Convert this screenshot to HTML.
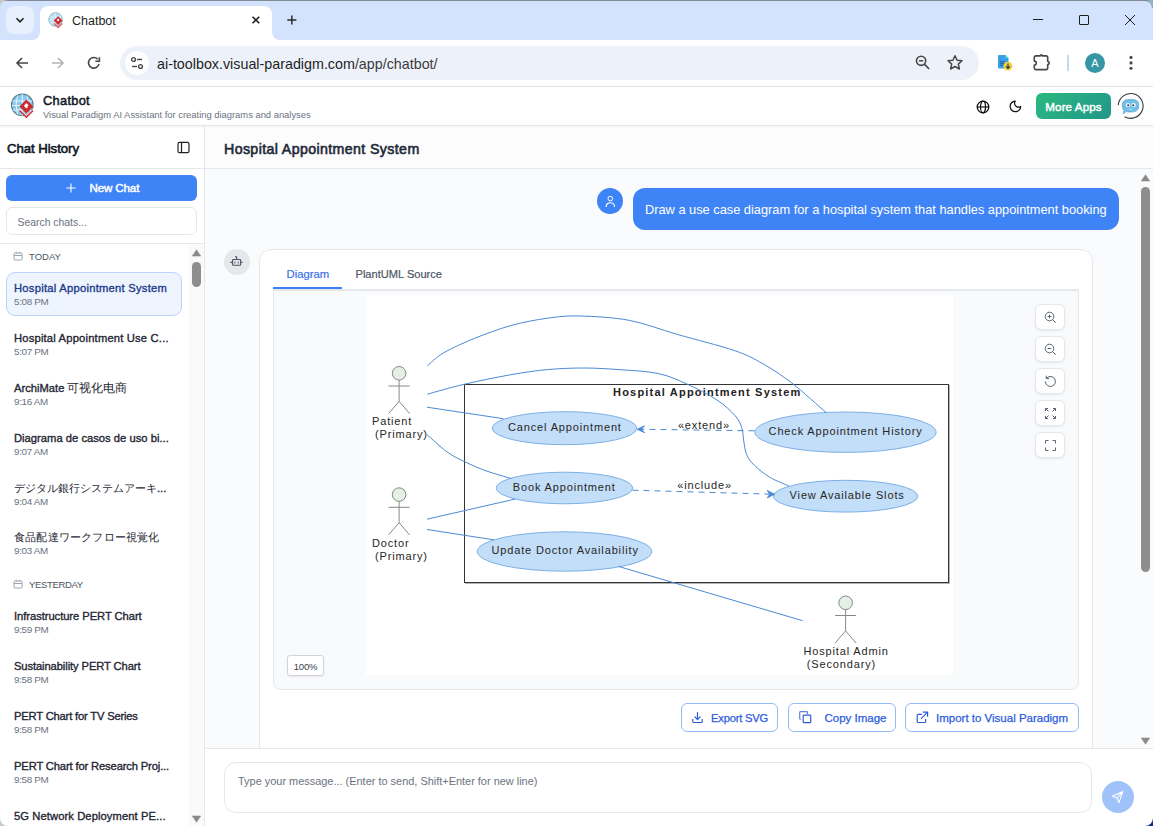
<!DOCTYPE html>
<html><head><meta charset="utf-8">
<style>
*{box-sizing:border-box;margin:0;padding:0}
html,body{width:1153px;height:826px;overflow:hidden;background:#fff;font-family:"Liberation Sans",sans-serif}
.a{position:absolute}
.t{position:absolute;white-space:nowrap;line-height:1}
svg{position:absolute;overflow:visible}
</style></head><body>
<!-- ===== browser tab strip ===== -->
<div class="a" style="left:0;top:0;width:1153px;height:40px;background:#d3e3fd"></div>
<div class="a" style="left:0;top:0;width:1153px;height:1px;background:#808b96"></div>
<svg style="left:1145px;top:0" width="8" height="8" viewBox="0 0 8 8"><path d="M0 0 H8 V8 A8 8 0 0 0 0 0 Z" fill="#8fb0cb"/><path d="M0 0.5 A7.5 7.5 0 0 1 7.5 8" fill="none" stroke="#6f8293" stroke-width="0.8"/></svg>
<svg style="left:0;top:0" width="8" height="8" viewBox="0 0 8 8"><path d="M8 0 H0 V8 A8 8 0 0 1 8 0 Z" fill="#c8c8c8"/></svg>
<div class="a" style="left:6px;top:6px;width:28px;height:28px;border-radius:8px;background:#e9f0fd"></div>
<svg style="left:14px;top:14px" width="12" height="12" viewBox="0 0 12 12"><path d="M2.5 4.3 L6 7.8 L9.5 4.3" fill="none" stroke="#1f1f1f" stroke-width="1.6"/></svg>
<!-- active tab -->
<div class="a" style="left:40px;top:6px;width:232px;height:40px;background:#fff;border-radius:8px 8px 0 0"></div>
<svg style="left:32px;top:32px" width="8" height="8" viewBox="0 0 8 8"><path d="M0 8 A8 8 0 0 0 8 0 V8 Z" fill="#fff"/></svg>
<svg style="left:272px;top:32px" width="8" height="8" viewBox="0 0 8 8"><path d="M8 8 A8 8 0 0 1 0 0 V8 Z" fill="#fff"/></svg>
<svg style="left:48px;top:12px" width="16" height="17" viewBox="0 0 16 17"><circle cx="7.6" cy="7.5" r="6.8" fill="#b5e3f8" stroke="#90aab5" stroke-width="0.9"/><path d="M1.5 5.2 H13.7 M1.2 8 H14 M2 10.8 H13 M7.6 0.8 V14.2" stroke="#e8f6fd" stroke-width="0.7" fill="none"/><path d="M10.1 4.2 L14.5 8.6 L10.1 13 L5.7 8.6 Z" fill="#cf2a2e"/><path d="M10 6.4 L11.4 7.8 L10.2 9.6 L8.7 8 Z" fill="#fff"/><path d="M6 11.4 L10.1 15.5 L14.2 11.4" fill="none" stroke="#e06a6e" stroke-width="1.5"/></svg>
<div class="t" style="left:72px;top:15px;font-size:12.5px;color:#1f1f1f">Chatbot</div>
<svg style="left:250px;top:14px" width="12" height="12" viewBox="0 0 12 12"><path d="M2.5 2.7 L9.3 9.3 M9.3 2.7 L2.5 9.3" stroke="#1f1f1f" stroke-width="1.6"/></svg>
<svg style="left:286px;top:14px" width="12" height="12" viewBox="0 0 12 12"><path d="M5.85 1.4 V10.5 M1.3 5.95 H10.4" stroke="#2a2a2a" stroke-width="1.5"/></svg>
<!-- window controls -->
<div class="a" style="left:1033px;top:19px;width:10px;height:1px;background:#1f1f1f"></div>
<div class="a" style="left:1079px;top:15px;width:10px;height:10px;border:1px solid #1f1f1f;border-radius:1px"></div>
<svg style="left:1124px;top:14px" width="12" height="12" viewBox="0 0 12 12"><path d="M1 1 L11 11 M11 1 L1 11" stroke="#1f1f1f" stroke-width="1"/></svg>

<!-- ===== toolbar ===== -->
<div class="a" style="left:0;top:40px;width:1153px;height:46px;background:#fff;border-radius:8px 0 0 0"></div>
<div class="a" style="left:0;top:86px;width:1153px;height:1px;background:#e3e3e3"></div>
<svg style="left:14px;top:55px" width="16" height="16" viewBox="0 0 16 16"><path d="M14 8 H3 M8 3 L3 8 L8 13" fill="none" stroke="#474747" stroke-width="1.6"/></svg>
<svg style="left:50px;top:55px" width="16" height="16" viewBox="0 0 16 16"><path d="M2 8 H13 M8 3 L13 8 L8 13" fill="none" stroke="#b4b4b4" stroke-width="1.6"/></svg>
<svg style="left:86px;top:55px" width="16" height="16" viewBox="0 0 16 16"><path d="M13 8.9 A5.3 5.3 0 1 1 11.6 4.1" fill="none" stroke="#474747" stroke-width="1.6"/><path d="M13.4 2.2 V6.3 H9.3" fill="none" stroke="#474747" stroke-width="1.6"/></svg>
<div class="a" style="left:120px;top:46px;width:859px;height:34px;border-radius:17px;background:#edf2fa"></div>
<div class="a" style="left:125px;top:51px;width:24px;height:24px;border-radius:12px;background:#fff"></div>
<svg style="left:129px;top:55px" width="16" height="16" viewBox="0 0 16 16"><circle cx="4.5" cy="4.5" r="1.9" fill="none" stroke="#474747" stroke-width="1.4"/><path d="M8 4.5 H13" stroke="#474747" stroke-width="1.4"/><circle cx="11.5" cy="11.5" r="1.9" fill="none" stroke="#474747" stroke-width="1.4"/><path d="M3 11.5 H8" stroke="#474747" stroke-width="1.4"/></svg>
<div class="t" style="left:157px;top:57px;font-size:14.3px;color:#1f1f1f">ai-toolbox.visual-paradigm.com<span style="color:#3c3c3c">/app/chatbot/</span></div>
<svg style="left:914px;top:55px" width="18" height="18" viewBox="0 0 18 18"><circle cx="7.1" cy="5.8" r="4.6" fill="none" stroke="#474747" stroke-width="1.6"/><path d="M10.4 9.2 L15.1 14" stroke="#474747" stroke-width="1.7"/><path d="M5 5.8 H9.2" stroke="#474747" stroke-width="1.5"/></svg>
<svg style="left:946px;top:54px" width="18" height="18" viewBox="0 0 18 18"><path d="M9 1.8 L11.1 6.3 L16 6.8 L12.3 10.1 L13.4 15 L9 12.5 L4.6 15 L5.7 10.1 L2 6.8 L6.9 6.3 Z" fill="none" stroke="#474747" stroke-width="1.5" stroke-linejoin="round"/></svg>
<svg style="left:996px;top:54px" width="20" height="20" viewBox="0 0 20 20"><path d="M3 1 H9.5 L12.5 4 V13.6 A1 1 0 0 1 11.5 14.6 H3 A1 1 0 0 1 2 13.6 V2 A1 1 0 0 1 3 1 Z" fill="#3b9fe6"/><path d="M9.5 1 L12.5 4 H9.5 Z" fill="#62dcc6"/><path d="M4 7.6 H8.3 M4 9.4 H8.3 M4 11.2 H7" stroke="#1f5a98" stroke-width="0.9"/><circle cx="12" cy="12.2" r="4.4" fill="#f5d03c"/><path d="M12 9.6 V14.3 M10 12.4 L12 14.4 L14 12.4" fill="none" stroke="#23304a" stroke-width="1.1"/></svg>
<svg style="left:1032px;top:52px" width="20" height="20" viewBox="0 0 20 20"><path d="M3.8 3.9 H8.3 A1 1 0 0 1 10.3 3.9 H14.2 A1.5 1.5 0 0 1 15.7 5.4 V9.5 A1.5 1.5 0 0 1 15.7 12.5 V16.1 A1.5 1.5 0 0 1 14.2 17.6 H3.8 A1.5 1.5 0 0 1 2.3 16.1 V13.1 A2 2 0 0 0 2.3 9.1 V5.4 A1.5 1.5 0 0 1 3.8 3.9 Z" fill="none" stroke="#474747" stroke-width="1.6" stroke-linejoin="round"/></svg>
<div class="a" style="left:1067px;top:55px;width:2px;height:16px;background:#c6d7f5"></div>
<div class="a" style="left:1085px;top:53px;width:20px;height:20px;border-radius:10px;background:#3596a4"></div>
<div class="t" style="left:1085px;top:58px;width:20px;text-align:center;font-size:11px;color:#fff">A</div>
<svg style="left:1124px;top:54px" width="14" height="18" viewBox="0 0 14 18"><circle cx="7" cy="3.4" r="1.55" fill="#474747"/><circle cx="7" cy="8.9" r="1.55" fill="#474747"/><circle cx="7" cy="14.3" r="1.55" fill="#474747"/></svg>

<!-- ===== app header ===== -->
<div class="a" style="left:0;top:87px;width:1153px;height:38px;background:#fff"></div>
<div class="a" style="left:0;top:125px;width:1153px;height:1px;background:#e5e7eb"></div>
<div class="a" style="left:0;top:126px;width:1153px;height:2px;background:linear-gradient(#f0f1f3,#fff)"></div>
<svg style="left:11px;top:93px" width="24" height="26" viewBox="0 0 24 26"><circle cx="11.3" cy="11.9" r="10.8" fill="#86c9ef" stroke="#5a8190" stroke-width="1.1"/><path d="M1.5 8 H21 M1 12.5 H21.5 M2 17 H20 M11.3 1.2 V22.6 M6.5 2.5 Q3.5 11.9 6.5 21.3 M16 2.5 Q19 11.9 16 21.3" stroke="#f2faff" stroke-width="0.9" fill="none"/><path d="M15.4 6.6 L22.4 13.6 L15.4 20.6 L8.4 13.6 Z" fill="#cf2a2e"/><path d="M15.2 9.9 L17.6 12.2 L16.4 13.4 L17 14 L15.4 15.6 L12.9 13.1 Z" fill="#fff"/><path d="M8.9 17.4 L15.4 23.9 L21.9 17.4" fill="none" stroke="#cf2a2e" stroke-width="2"/><path d="M8.2 15.6 L15.4 22.8 L22.6 15.6" fill="none" stroke="#fff" stroke-width="0.9"/></svg>
<div class="t" style="left:43px;top:95px;font-size:12.8px;font-weight:400;color:#111827;-webkit-text-stroke:0.5px #111827;letter-spacing:0.3px">Chatbot</div>
<div class="t" style="left:43px;top:110px;font-size:9.4px;color:#6b7280">Visual Paradigm AI Assistant for creating diagrams and analyses</div>
<svg style="left:976.4px;top:99.6px" width="14" height="14" viewBox="0 0 14 14"><circle cx="7" cy="7" r="5.8" fill="none" stroke="#111" stroke-width="1.3"/><ellipse cx="7" cy="7" rx="2.5" ry="5.8" fill="none" stroke="#111" stroke-width="1.2"/><path d="M1.2 7 H12.8" stroke="#111" stroke-width="1.2"/></svg>
<svg style="left:1008px;top:99px" width="14" height="14" viewBox="0 0 14 14"><path d="M7.2 2.1 A5.3 5.3 0 1 0 12.7 7.4 A3.9 3.9 0 0 1 7.2 2.1 Z" fill="none" stroke="#111" stroke-width="1.2" stroke-linejoin="round"/></svg>
<div class="a" style="left:1036px;top:93px;width:75px;height:26px;border-radius:6px;background:linear-gradient(135deg,#2bb97f,#22968a)"></div>
<div class="t" style="left:1036px;top:101px;width:75px;text-align:center;font-size:11.6px;font-weight:400;color:#fff;-webkit-text-stroke:0.45px #fff;letter-spacing:0.1px">More Apps</div>
<svg style="left:1117px;top:92px" width="27" height="28" viewBox="0 0 27 28"><path d="M1.3 13.3 A12.4 12.4 0 1 1 7.6 24.7" fill="none" stroke="#2f3a44" stroke-width="1.1"/><path d="M5.3 13.6 C5.3 8.5 8 7.4 13.4 7.4 C18.8 7.4 21.7 8.5 21.7 13.6 C21.7 18.7 18.8 20 13.4 20 C11.5 20 10 19.9 9 19.6 L6.3 21.8 L7 18.2 C5.8 17.2 5.3 15.8 5.3 13.6 Z" fill="#6ec0ea" stroke="#4b90b8" stroke-width="0.6"/><circle cx="10.9" cy="13.1" r="2.2" fill="#f4fbff"/><circle cx="16.5" cy="13.1" r="2.2" fill="#f4fbff"/><circle cx="11.2" cy="13.3" r="1.1" fill="#3a4650"/><circle cx="16.2" cy="13.3" r="1.1" fill="#3a4650"/><path d="M12.3 17.3 H14.7" stroke="#d9f0fb" stroke-width="0.9"/></svg>

<!-- SIDEBAR -->
<div class="a" style="left:0;top:128px;width:205px;height:698px;background:#fff"></div>
<div class="a" style="left:204px;top:126px;width:1px;height:700px;background:#e5e7eb"></div>
<div class="t" style="left:7px;top:141.9px;font-size:13.2px;font-weight:400;color:#111827;-webkit-text-stroke:0.6px #111827;letter-spacing:-0.05px">Chat History</div>
<svg style="left:177px;top:141px" width="13" height="13" viewBox="0 0 13 13"><rect x="1" y="1.3" width="11" height="10.4" rx="1.6" fill="none" stroke="#222" stroke-width="1.2"/><path d="M4.5 1.3 V11.7" stroke="#222" stroke-width="1.2"/></svg>
<div class="a" style="left:0;top:168px;width:204px;height:1px;background:#e5e7eb"></div>
<div class="a" style="left:6px;top:175px;width:191px;height:26px;border-radius:6px;background:#3f84f6"></div>
<svg style="left:66px;top:183px" width="10" height="10" viewBox="0 0 10 10"><path d="M5 0.5 V9.5 M0.5 5 H9.5" stroke="#fff" stroke-width="1.1"/></svg>
<div class="t" style="left:89.5px;top:182.4px;font-size:11.6px;font-weight:400;color:#fff;-webkit-text-stroke:0.45px #fff;letter-spacing:-0.15px">New Chat</div>
<div class="a" style="left:6px;top:207px;width:191px;height:28px;border-radius:6px;border:1px solid #e5e7eb;background:#fff"></div>
<div class="t" style="left:17.5px;top:218px;font-size:10.4px;color:#6b7280">Search chats...</div>
<div class="a" style="left:0;top:243px;width:204px;height:1px;background:#e5e7eb"></div>
<!-- scrollbar -->
<div class="a" style="left:189px;top:244px;width:15px;height:582px;background:#fafafa"></div>
<svg style="left:192px;top:249px" width="9" height="8" viewBox="0 0 9 8"><path d="M0.3 7 L4.5 0.8 L8.7 7 Z" fill="#8a8a8a" stroke="#8a8a8a" stroke-width="0.6" stroke-linejoin="round"/></svg>
<div class="a" style="left:192px;top:262px;width:9px;height:25px;border-radius:4.5px;background:#8e8e8e"></div>
<svg style="left:192px;top:815px" width="9" height="8" viewBox="0 0 9 8"><path d="M0.3 1 L4.5 7.2 L8.7 1 Z" fill="#8a8a8a" stroke="#8a8a8a" stroke-width="0.6" stroke-linejoin="round"/></svg>
<!-- TODAY -->
<svg style="left:13px;top:251px" width="10" height="10" viewBox="0 0 10 10"><rect x="1" y="2" width="8" height="7" rx="1" fill="none" stroke="#9ca3af" stroke-width="1"/><path d="M1 4.5 H9 M3.3 0.8 V2.5 M6.7 0.8 V2.5" stroke="#9ca3af" stroke-width="1"/></svg>
<div class="t" style="left:29px;top:251.5px;font-size:9.5px;font-weight:400;color:#4b5563;letter-spacing:0px">TODAY</div>
<div class="a" style="left:6px;top:272px;width:176px;height:44px;border-radius:9px;background:#eef5ff;border:1px solid #bcd4fb"></div>
<div class="t" style="left:14px;top:283px;font-size:11.2px;letter-spacing:0.26px;font-weight:400;color:#1e3a8a;-webkit-text-stroke:0.35px #1e3a8a">Hospital Appointment System</div>
<div class="t" style="left:14px;top:296.8px;font-size:9.9px;color:#6b7280;letter-spacing:-0.35px">5:08 PM</div>
<div class="t" style="left:14px;top:333px;font-size:11.2px;letter-spacing:0.19px;font-weight:400;color:#1f2633;-webkit-text-stroke:0.35px #1f2633">Hospital Appointment Use C...</div>
<div class="t" style="left:14px;top:346.8px;font-size:9.9px;color:#6b7280;letter-spacing:-0.35px">5:07 PM</div>
<div class="t" style="left:14px;top:383px;font-size:11.2px;font-weight:400;color:#1f2633;-webkit-text-stroke:0.35px #1f2633">ArchiMate <span style="font-weight:400;font-size:11.5px;-webkit-text-stroke:0">可视化电商</span></div>
<div class="t" style="left:14px;top:396.8px;font-size:9.9px;color:#6b7280;letter-spacing:-0.35px">9:16 AM</div>
<div class="t" style="left:14px;top:433px;font-size:11.2px;letter-spacing:0.02px;font-weight:400;color:#1f2633;-webkit-text-stroke:0.35px #1f2633">Diagrama de casos de uso bi...</div>
<div class="t" style="left:14px;top:446.8px;font-size:9.9px;color:#6b7280;letter-spacing:-0.35px">9:07 AM</div>
<div class="t" style="left:14px;top:482.5px;font-size:11.2px;font-weight:400;color:#1f2633;-webkit-text-stroke:0.35px #1f2633"><span style="font-weight:400;font-size:11.3px;-webkit-text-stroke:0">デジタル銀行システムアーキ</span>...</div>
<div class="t" style="left:14px;top:496.8px;font-size:9.9px;color:#6b7280;letter-spacing:-0.35px">9:04 AM</div>
<div class="t" style="left:14px;top:531.5px;font-size:11.2px;font-weight:400;color:#1f2633;-webkit-text-stroke:0.35px #1f2633"><span style="font-weight:400;font-size:11.3px;-webkit-text-stroke:0;letter-spacing:0.2px">食品配達ワークフロー視覚化</span></div>
<div class="t" style="left:14px;top:545.8px;font-size:9.9px;color:#6b7280;letter-spacing:-0.35px">9:03 AM</div>
<svg style="left:13px;top:579px" width="10" height="10" viewBox="0 0 10 10"><rect x="1" y="2" width="8" height="7" rx="1" fill="none" stroke="#9ca3af" stroke-width="1"/><path d="M1 4.5 H9 M3.3 0.8 V2.5 M6.7 0.8 V2.5" stroke="#9ca3af" stroke-width="1"/></svg>
<div class="t" style="left:29px;top:580px;font-size:9.5px;font-weight:400;color:#4b5563;letter-spacing:-0.35px">YESTERDAY</div>
<div class="t" style="left:14px;top:611px;font-size:11.2px;letter-spacing:-0.05px;font-weight:400;color:#1f2633;-webkit-text-stroke:0.35px #1f2633">Infrastructure PERT Chart</div>
<div class="t" style="left:14px;top:624.8px;font-size:9.9px;color:#6b7280;letter-spacing:-0.35px">9:59 PM</div>
<div class="t" style="left:14px;top:661px;font-size:11.2px;letter-spacing:-0.1px;font-weight:400;color:#1f2633;-webkit-text-stroke:0.35px #1f2633">Sustainability PERT Chart</div>
<div class="t" style="left:14px;top:674.8px;font-size:9.9px;color:#6b7280;letter-spacing:-0.35px">9:58 PM</div>
<div class="t" style="left:14px;top:711px;font-size:11.2px;letter-spacing:-0.18px;font-weight:400;color:#1f2633;-webkit-text-stroke:0.35px #1f2633">PERT Chart for TV Series</div>
<div class="t" style="left:14px;top:724.8px;font-size:9.9px;color:#6b7280;letter-spacing:-0.35px">9:58 PM</div>
<div class="t" style="left:14px;top:761px;font-size:11.2px;letter-spacing:-0.14px;font-weight:400;color:#1f2633;-webkit-text-stroke:0.35px #1f2633">PERT Chart for Research Proj...</div>
<div class="t" style="left:14px;top:774.8px;font-size:9.9px;color:#6b7280;letter-spacing:-0.35px">9:58 PM</div>
<div class="t" style="left:14px;top:811px;font-size:11.2px;letter-spacing:0.09px;font-weight:400;color:#1f2633;-webkit-text-stroke:0.35px #1f2633">5G Network Deployment PE...</div>
<!-- MAIN -->
<div class="a" style="left:205px;top:128px;width:948px;height:40px;background:#fcfcfd"></div>
<div class="t" style="left:224px;top:142.3px;font-size:14.2px;font-weight:400;color:#1f2937;-webkit-text-stroke:0.6px #1f2937;letter-spacing:0.38px">Hospital Appointment System</div>
<div class="a" style="left:205px;top:168px;width:948px;height:1px;background:#e5e7eb"></div>
<div class="a" style="left:205px;top:169px;width:948px;height:579px;background:#fafbfc"></div>
<!-- chat scrollbar -->
<svg style="left:1141px;top:174px" width="9" height="8" viewBox="0 0 9 8"><path d="M0.3 7 L4.5 0.8 L8.7 7 Z" fill="#8a8a8a" stroke="#8a8a8a" stroke-width="0.6" stroke-linejoin="round"/></svg>
<div class="a" style="left:1141px;top:187px;width:9px;height:385px;border-radius:4.5px;background:#8e8e8e"></div>
<svg style="left:1141px;top:737px" width="9" height="8" viewBox="0 0 9 8"><path d="M0.3 1 L4.5 7.2 L8.7 1 Z" fill="#8a8a8a" stroke="#8a8a8a" stroke-width="0.6" stroke-linejoin="round"/></svg>
<!-- user message -->
<div class="a" style="left:597px;top:188px;width:26px;height:26px;border-radius:13px;background:#3f84f6"></div>
<svg style="left:603px;top:194px" width="14" height="14" viewBox="0 0 14 14"><circle cx="7.3" cy="4.6" r="2.3" fill="none" stroke="#fff" stroke-width="1"/><path d="M3.2 13 V12.3 A4.1 3.6 0 0 1 11.4 12.3 V13" fill="none" stroke="#fff" stroke-width="1.1"/></svg>
<div class="a" style="left:633px;top:188px;width:486px;height:42px;border-radius:12px;background:#3f84f6"></div>
<div class="t" style="left:645px;top:204px;font-size:12.8px;color:#fff">Draw a use case diagram for a hospital system that handles appointment booking</div>
<!-- bot avatar -->
<div class="a" style="left:224px;top:249px;width:26px;height:26px;border-radius:13px;background:#e5e7eb"></div>
<svg style="left:230px;top:255px" width="14" height="14" viewBox="0 0 14 14"><rect x="2.6" y="4.5" width="8" height="5.8" rx="0.6" fill="none" stroke="#4b5563" stroke-width="1.1"/><path d="M6.6 4.5 V1.7 H5" fill="none" stroke="#4b5563" stroke-width="1.1"/><path d="M0.3 7.4 H2.1 M11.1 7.4 H12.5" stroke="#4b5563" stroke-width="1.1"/><path d="M4.9 6.2 V8.8 M8.3 6.2 V8.8" stroke="#6b7280" stroke-width="0.9"/></svg>
<!-- card -->
<div class="a" style="left:259px;top:249px;width:834px;height:540px;border-radius:12px;background:#fff;border:1px solid #e5e7eb"></div>
<div class="t" style="left:286.5px;top:268.8px;font-size:11.3px;color:#3b6fe8;-webkit-text-stroke:0.2px #3b6fe8">Diagram</div>
<div class="t" style="left:355.5px;top:268.8px;font-size:11.1px;color:#4b5563;-webkit-text-stroke:0.2px #4b5563">PlantUML Source</div>
<div class="a" style="left:273px;top:289px;width:806px;height:1px;background:#e5e7eb"></div>
<div class="a" style="left:273px;top:287px;width:69px;height:2px;background:#3b82f6"></div>
<div class="a" style="left:273px;top:290px;width:806px;height:400px;border-radius:0 0 8px 8px;background:#f8fafc;border:1px solid #e5e7eb"></div>
<div class="a" style="left:366px;top:295px;width:587px;height:380px;background:#fff"></div>
<!-- DIAGRAM -->
<svg style="left:366px;top:295px" width="587" height="380" viewBox="366 295 587 380">
<g font-family="Liberation Sans, sans-serif" font-size="11" fill="#262626" letter-spacing="0.85">
<rect x="465.5" y="385.5" width="484" height="198" fill="none" stroke="#b5b5b5" stroke-width="1"/>
<rect x="464.5" y="384.5" width="484" height="198" fill="#fff" stroke="#333" stroke-width="1"/>
<text x="613" y="396" font-weight="700" letter-spacing="1.2" fill="#222">Hospital Appointment System</text>
<ellipse cx="564.5" cy="428.2" rx="72.3" ry="16.5" fill="#c3def8" stroke="#7cb0e6" stroke-width="1"/>
<ellipse cx="564.4" cy="488" rx="68.3" ry="15.8" fill="#c3def8" stroke="#7cb0e6" stroke-width="1"/>
<ellipse cx="845.5" cy="432.2" rx="90.6" ry="20.2" fill="#c3def8" stroke="#7cb0e6" stroke-width="1"/>
<ellipse cx="845.6" cy="496.2" rx="72.2" ry="15.9" fill="#c3def8" stroke="#7cb0e6" stroke-width="1"/>
<ellipse cx="564.5" cy="551.5" rx="87.3" ry="19.7" fill="#c3def8" stroke="#7cb0e6" stroke-width="1"/>
<path d="M427.3,365.9 C430.0,363.7 435.8,357.4 443.7,352.8 C451.6,348.2 463.4,342.9 474.6,338.3 C485.8,333.8 498.9,328.9 511.0,325.5 C523.1,322.1 536.0,319.8 547.5,318.2 C559.0,316.6 566.6,315.6 580.3,316.0 C594.0,316.4 613.3,317.3 629.5,320.4 C645.7,323.5 659.8,329.4 677.3,334.4 C694.8,339.4 720.2,345.7 734.5,350.6 C748.8,355.5 753.6,358.5 763.1,363.9 C772.6,369.3 781.3,374.9 791.8,383.0 C802.3,391.1 820.4,407.7 826.1,412.6" fill="none" stroke="#4a8ad4" stroke-width="1"/>
<path d="M427.3,394.2 C433.5,392.5 450.7,387.4 464.6,384.2 C478.6,380.9 497.2,377.1 511.0,374.7 C524.8,372.3 535.3,370.7 547.5,369.6 C559.7,368.5 571.9,368.0 584.0,368.0 C596.1,368.0 607.6,368.8 620.0,369.7 C632.4,370.6 647.1,371.1 658.2,373.5 C669.3,375.9 677.0,379.6 686.8,384.0 C696.6,388.4 709.0,394.7 717.0,400.0 C725.0,405.3 731.0,411.1 735.1,415.7 C739.2,420.3 740.4,423.8 741.8,427.8 C743.2,431.9 742.8,435.6 743.6,440.0 C744.4,444.4 744.8,450.3 746.6,454.5 C748.4,458.7 750.6,461.6 754.5,465.4 C758.4,469.2 764.5,474.1 770.2,477.5 C776.0,480.9 785.9,484.6 789.0,486.0" fill="none" stroke="#4a8ad4" stroke-width="1"/>
<path d="M426.9,434.5 C430.3,437.4 440.9,447.5 447.2,452.0 C453.5,456.5 458.2,458.6 464.7,461.7 C471.2,464.8 478.2,468.0 486.0,470.8 C493.8,473.6 507.0,477.2 511.2,478.5" fill="none" stroke="#4a8ad4" stroke-width="1"/>
<path d="M427,407.2 L503.4,418.7" fill="none" stroke="#4a8ad4" stroke-width="1"/>
<path d="M427,519.2 L515,499.1" fill="none" stroke="#4a8ad4" stroke-width="1"/>
<path d="M427,529.5 L493.7,539.8" fill="none" stroke="#4a8ad4" stroke-width="1"/>
<path d="M618.4,566.4 L802.6,620.7" fill="none" stroke="#4a8ad4" stroke-width="1"/>
<path d="M754.5,430.8 L641,429.3" fill="none" stroke="#4a8ad4" stroke-width="1" stroke-dasharray="6,5"/>
<path d="M632.5,490.2 L769,494.1" fill="none" stroke="#4a8ad4" stroke-width="1" stroke-dasharray="6,5"/>
<path d="M637,429.3 L644.6,425.8 L641.6,429.3 L644.6,432.8 Z" fill="#4a8ad4" stroke="#4a8ad4" stroke-width="0.8" stroke-linejoin="miter"/>
<path d="M774.7,494.2 L767.2,490.4 L769.6,494.2 L767.2,498 Z" fill="#4a8ad4" stroke="#4a8ad4" stroke-width="0.8"/>
<circle cx="399.1" cy="373.3" r="6.8" fill="#e3f0e3" stroke="#888" stroke-width="1"/><path d="M399.1,380.1 V401.40000000000003 M388.6,386.0 H409.6 M388.6,413.6 L399.1,401.40000000000003 L409.6,413.6" fill="none" stroke="#888" stroke-width="1"/>
<circle cx="399.1" cy="494.6" r="6.8" fill="#e3f0e3" stroke="#888" stroke-width="1"/><path d="M399.1,501.40000000000003 V522.7 M388.6,507.3 H409.6 M388.6,534.9 L399.1,522.7 L409.6,534.9" fill="none" stroke="#888" stroke-width="1"/>
<circle cx="845.6" cy="602.8" r="6.8" fill="#e3f0e3" stroke="#888" stroke-width="1"/><path d="M845.6,609.5999999999999 V630.9 M835.1,615.5 H856.1 M835.1,643.0999999999999 L845.6,630.9 L856.1,643.0999999999999" fill="none" stroke="#888" stroke-width="1"/>
<text x="372" y="425.4">Patient</text>
<text x="375" y="438.4">(Primary)</text>
<text x="372" y="547.0">Doctor</text>
<text x="375" y="560.2">(Primary)</text>
<text x="803.4" y="655.2">Hospital Admin</text>
<text x="806.8" y="668.4">(Secondary)</text>
<text x="508" y="431.3">Cancel Appointment</text>
<text x="512.8" y="490.6">Book Appointment</text>
<text x="768.6" y="435.4">Check Appointment History</text>
<text x="789.6" y="499.4">View Available Slots</text>
<text x="491.5" y="554.2">Update Doctor Availability</text>
<text x="677.9" y="428.7">«extend»</text>
<text x="677.2" y="489.3">«include»</text>
</g></svg>
<!-- /DIAGRAM -->
<!-- controls -->
<div class="a" style="left:1035px;top:304px;width:30px;height:26px;border-radius:6px;background:#fff;border:1px solid #e5e7eb;box-shadow:0 1px 2px rgba(0,0,0,0.08)"></div>
<div class="a" style="left:1035px;top:336px;width:30px;height:26px;border-radius:6px;background:#fff;border:1px solid #e5e7eb;box-shadow:0 1px 2px rgba(0,0,0,0.08)"></div>
<div class="a" style="left:1035px;top:368px;width:30px;height:26px;border-radius:6px;background:#fff;border:1px solid #e5e7eb;box-shadow:0 1px 2px rgba(0,0,0,0.08)"></div>
<div class="a" style="left:1035px;top:400px;width:30px;height:26px;border-radius:6px;background:#fff;border:1px solid #e5e7eb;box-shadow:0 1px 2px rgba(0,0,0,0.08)"></div>
<div class="a" style="left:1035px;top:432px;width:30px;height:26px;border-radius:6px;background:#fff;border:1px solid #e5e7eb;box-shadow:0 1px 2px rgba(0,0,0,0.08)"></div>
<svg style="left:1044px;top:311px" width="13" height="13" viewBox="0 0 13 13"><circle cx="5.5" cy="5.5" r="4.3" fill="none" stroke="#5b6472" stroke-width="1"/><path d="M8.6 8.6 L11.8 11.8" stroke="#5b6472" stroke-width="1"/><path d="M5.5 3.6 V7.4 M3.6 5.5 H7.4" stroke="#5b6472" stroke-width="1"/></svg>
<svg style="left:1044px;top:343px" width="13" height="13" viewBox="0 0 13 13"><circle cx="5.5" cy="5.5" r="4.3" fill="none" stroke="#5b6472" stroke-width="1"/><path d="M8.6 8.6 L11.8 11.8" stroke="#5b6472" stroke-width="1"/><path d="M3.6 5.5 H7.4" stroke="#5b6472" stroke-width="1"/></svg>
<svg style="left:1044px;top:375px" width="13" height="13" viewBox="0 0 13 13"><path d="M1.4 6.5 A5 5 0 1 0 2.9 2.9" fill="none" stroke="#5b6472" stroke-width="1"/><path d="M2.2 0.6 V3.6 H5.2" fill="none" stroke="#5b6472" stroke-width="1"/></svg>
<svg style="left:1044px;top:407px" width="13" height="13" viewBox="0 0 13 13"><path d="M1.5 1.5 L4.5 4.5 M1.5 1.5 V4 M1.5 1.5 H4 M11.5 1.5 L8.5 4.5 M11.5 1.5 V4 M11.5 1.5 H9 M1.5 11.5 L4.5 8.5 M1.5 11.5 V9 M1.5 11.5 H4 M11.5 11.5 L8.5 8.5 M11.5 11.5 V9 M11.5 11.5 H9" fill="none" stroke="#5b6472" stroke-width="1"/></svg>
<svg style="left:1044px;top:439px" width="13" height="13" viewBox="0 0 13 13"><path d="M1.5 4.5 V1.5 H4.5 M8.5 1.5 H11.5 V4.5 M11.5 8.5 V11.5 H8.5 M4.5 11.5 H1.5 V8.5" fill="none" stroke="#5b6472" stroke-width="1"/></svg>
<div class="a" style="left:287px;top:655px;width:37px;height:21px;border-radius:3px;background:#fff;border:1px solid #d1d5db;box-shadow:0 1px 2px rgba(0,0,0,0.08)"></div>
<div class="t" style="left:287px;top:661.5px;width:37px;text-align:center;font-size:9.5px;color:#374151;letter-spacing:-0.2px">100%</div>
<!-- action buttons -->
<div class="a" style="left:681px;top:703px;width:97px;height:29px;border-radius:6px;border:1px solid #93bbf8;background:#fff"></div>
<svg style="left:691px;top:711px" width="13" height="13" viewBox="0 0 13 13"><path d="M6.5 1.5 V8.5 M3.8 5.8 L6.5 8.5 L9.2 5.8 M1.8 8.3 V10.6 A0.9 0.9 0 0 0 2.7 11.5 H10.3 A0.9 0.9 0 0 0 11.2 10.6 V8.3" fill="none" stroke-linecap="round" stroke-linejoin="round" stroke="#2c5be0" stroke-width="1.2"/></svg>
<div class="t" style="left:711px;top:713px;font-size:11.2px;letter-spacing:-0.2px;color:#2c5be0;-webkit-text-stroke:0.25px #2c5be0">Export SVG</div>
<div class="a" style="left:788px;top:703px;width:108px;height:29px;border-radius:6px;border:1px solid #93bbf8;background:#fff"></div>
<svg style="left:798px;top:711px" width="14" height="14" viewBox="0 0 14 14"><rect x="5.2" y="4.2" width="7.5" height="7.5" rx="0.7" fill="none" stroke="#2c5be0" stroke-width="1.2"/><path d="M2.8 8.3 H2.4 A0.7 0.7 0 0 1 1.7 7.6 V1.5 A0.8 0.8 0 0 1 2.5 0.7 H8.7 A0.8 0.8 0 0 1 9.5 1.5 V3" fill="none" stroke="#2c5be0" stroke-width="1.2" stroke-opacity="0.75"/></svg>
<div class="t" style="left:824.5px;top:713px;font-size:11.5px;color:#2c5be0;-webkit-text-stroke:0.25px #2c5be0">Copy Image</div>
<div class="a" style="left:905px;top:703px;width:174px;height:29px;border-radius:6px;border:1px solid #93bbf8;background:#fff"></div>
<svg style="left:916px;top:711px" width="13" height="13" viewBox="0 0 13 13"><path d="M9.6 8.4 V10.6 A0.9 0.9 0 0 1 8.7 11.5 H2.1 A0.9 0.9 0 0 1 1.2 10.6 V4.2 A0.9 0.9 0 0 1 2.1 3.3 H5.6 M7.3 1.2 H11.6 V5.3 M11.6 1.2 L5.4 7.4" fill="none" stroke="#2c5be0" stroke-width="1.2" stroke-linecap="round" stroke-linejoin="round"/></svg>
<div class="t" style="left:936px;top:713px;font-size:11.5px;color:#2c5be0;-webkit-text-stroke:0.25px #2c5be0">Import to Visual Paradigm</div>
<!-- input area -->
<div class="a" style="left:205px;top:748px;width:948px;height:78px;background:#fff;border-top:1px solid #e5e7eb"></div>
<div class="a" style="left:224px;top:762px;width:868px;height:50.5px;border-radius:12px;border:1px solid #e5e7eb;background:#fff"></div>
<div class="t" style="left:238px;top:776px;font-size:10.95px;color:#6b7280">Type your message... (Enter to send, Shift+Enter for new line)</div>
<div class="a" style="left:1102px;top:781px;width:32px;height:32px;border-radius:16px;background:#9fc2fb"></div>
<svg style="left:1145px;top:818px" width="8" height="8" viewBox="0 0 8 8"><path d="M8 0 A8 8 0 0 1 0 8 H8 Z" fill="#0b2a8c"/></svg>
<svg style="left:0px;top:818px" width="8" height="8" viewBox="0 0 8 8"><path d="M0 0 A8 8 0 0 0 8 8 H0 Z" fill="#c9c9c9"/></svg>
<svg style="left:1110px;top:789px" width="16" height="16" viewBox="0 0 16 16"><path d="M12.8 2.6 L2.4 7.3 L7 9 L8.9 13.6 Z M12.8 2.6 L7 9" fill="none" stroke="#fff" stroke-width="1.1" stroke-linejoin="round"/></svg>
</body></html>
